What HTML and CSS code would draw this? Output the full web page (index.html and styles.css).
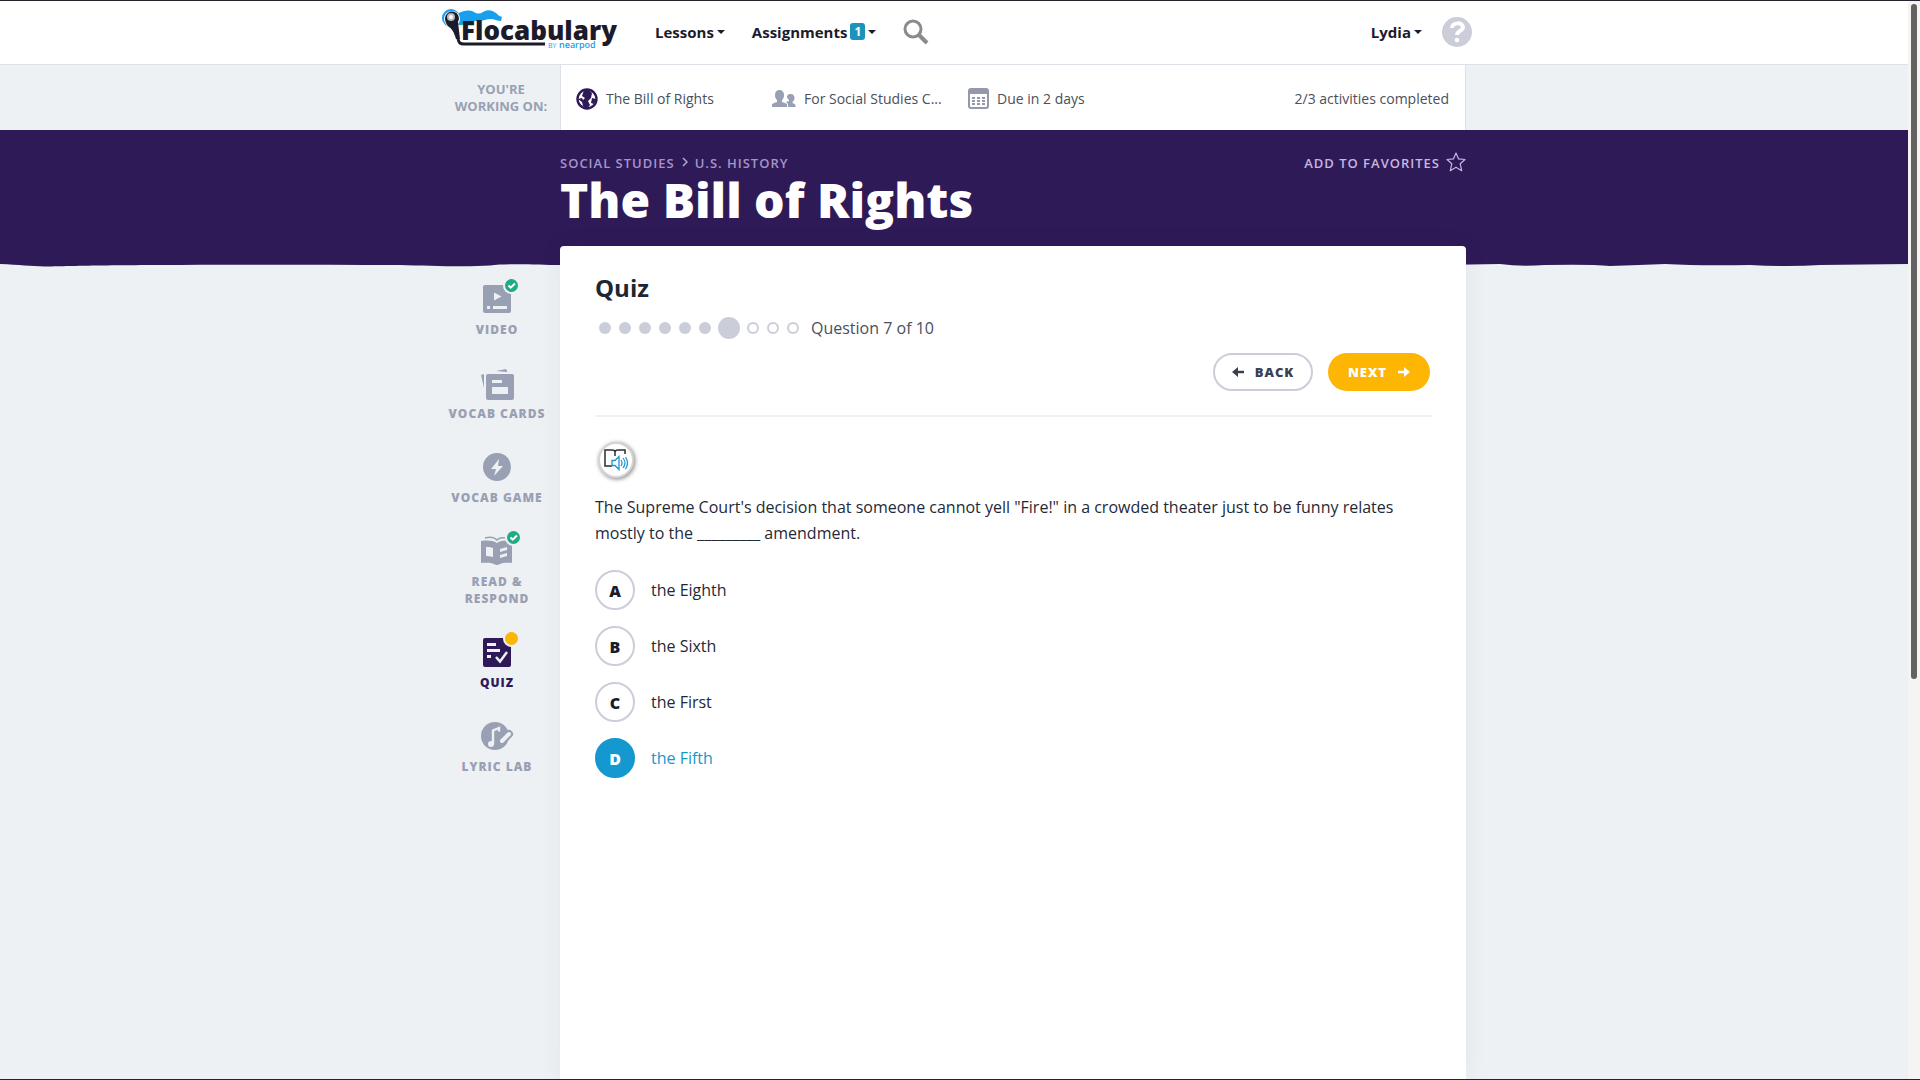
FILE: index.html
```html
<!DOCTYPE html>
<html lang="en">
<head>
<meta charset="utf-8">
<meta name="viewport" content="width=device-width, initial-scale=1">
<title>The Bill of Rights - Quiz - Flocabulary</title>
<link rel="stylesheet" href="styles.css">
</head>
<body>
<div class="page">
  <header class="header">
    <div class="wrap header-inner">
      <a class="logo" href="#" aria-label="Flocabulary by Nearpod">
        <svg width="176" height="46" viewBox="0 0 176 46">
          <path d="M16 5c6-3 11-5 17-2 3 2 6 2 9 0 5-3 9-2 13 1 2 2 3 3 6 4l-1 4c-4 0-7-2-10-2-5 0-8 2-12 2-6 0-10 0-13 3-4 1-6 2-9 0z" fill="#17a0ee"/>
          <circle cx="10" cy="9" r="9" fill="#17a0ee"/>
          <circle cx="11" cy="10" r="8" fill="#fff"/>
          <path d="M4 9a7 7 0 1 1 13 4l2 17h-4c-2-7-4-10-8-13-2-2-3-5-3-8z" fill="#1c1b2b"/>
          <circle cx="10" cy="8" r="4" fill="#b9b8bd"/>
          <circle cx="10" cy="8" r="2" fill="#fff"/>
          <path d="M17 30c1 4 2 5 6 5h81" fill="none" stroke="#1c1b2b" stroke-width="3"/>
          <text class="logo-name" x="20" y="31">Flocabulary</text>
          <text class="logo-by" x="107" y="39">BY</text>
          <text class="logo-near" x="118" y="39">nearpod</text>
        </svg>
      </a>
      <nav class="nav">
        <button type="button" class="nav-btn">Lessons <span class="caret"></span></button>
        <button type="button" class="nav-btn">Assignments <span class="count">1</span><span class="caret"></span></button>
        <button type="button" class="icon-btn" aria-label="Search">
          <svg width="26" height="26" viewBox="0 0 26 26" fill="none" stroke="#8b8b8b"><circle cx="10" cy="10" r="8" stroke-width="3"/><path d="M16 16l8 8" stroke-width="4"/></svg>
        </button>
      </nav>
      <div class="account">
        <button type="button" class="nav-btn">Lydia <span class="caret"></span></button>
        <button type="button" class="icon-btn" aria-label="Help">
          <svg width="30" height="30" viewBox="0 0 30 30"><circle cx="15" cy="15" r="15" fill="#cbced9"/><path d="M10 11c0-6 11-6 11-1 0 4-6 4-6 8" fill="none" stroke="#fff" stroke-width="4"/><circle cx="15" cy="23" r="2.3" fill="#fff"/></svg>
        </button>
      </div>
    </div>
  </header>

  <section class="assignment">
    <div class="wrap assignment-inner">
      <p class="working">YOU'RE<br>WORKING ON:</p>
      <div class="facts">
        <span class="fact fact-lesson">
          <svg width="22" height="22" viewBox="0 0 22 22"><circle cx="11" cy="11" r="9.500" fill="#fff" stroke="#2f1a58" stroke-width="2.400"/><path d="M8 2l5 0 3 3-1 5-3 3 2 4-3 4-4-3-1-4-4-3 4-1 1 2 2-2-3-2z" fill="#2f1a58"/><path d="M16 10l4 1-2 5-3-1z" fill="#2f1a58"/></svg>
          The Bill of Rights
        </span>
        <span class="fact fact-class">
          <svg width="24" height="18" viewBox="0 0 24 18" fill="#9aa0b3"><path d="M7.500 0c3 0 4.500 2 4.500 5s-1 4-2 5v2c2 1 5 1 5 3v2H0v-2c0-2 3-2 5-3v-2C4 9 3 8 3 5s1.500-5 4.500-5z"/><path d="M18.500 4c3 0 4 2 4 4s-1 3-2 4v1c2 1 3 1 3 3v1H16v-3l-2-2 3-1v-1c-1-1-2-2-2-3s.500-3 3.500-3z"/></svg>
          For Social Studies C...
        </span>
        <span class="fact">
          <svg width="21" height="21" viewBox="0 0 21 21"><rect x="1" y="1" width="19" height="19" rx="2" fill="#fff" stroke="#9598ab" stroke-width="2"/><path d="M1 1h19v5H1z" fill="#9598ab"/><path d="M4 10h13M4 13h13M4 16h13" stroke="#9598ab" stroke-width="2" stroke-dasharray="3 2"/></svg>
          Due in 2 days
        </span>
        <span class="done">2/3 activities completed</span>
      </div>
    </div>
  </section>

  <section class="hero">
    <div class="wrap hero-inner">
      <div class="hero-bar">
        <nav class="crumbs" aria-label="Breadcrumb">
          <a href="#">SOCIAL STUDIES</a>
          <svg width="6" height="12" viewBox="0 0 6 12" fill="none" stroke="#b6a6d3" stroke-width="1.500"><path d="M1 1l4 4-4 4"/></svg>
          <a href="#">U.S. HISTORY</a>
        </nav>
        <button type="button" class="favorite">ADD TO FAVORITES
          <svg width="20" height="22" viewBox="0 0 20 22" fill="none" stroke="#c5b7e0" stroke-width="1.200" stroke-linejoin="round"><path d="M10 1l2.600 5.900 6.400.600-4.800 4.300 1.500 6.900L10 15.300l-5.700 3.400 1.500-6.900L1 7.500l6.400-.600z"/></svg>
        </button>
      </div>
      <h1>The Bill of Rights</h1>
    </div>
  </section>
  <svg class="wave" viewBox="0 0 1908 4" preserveAspectRatio="none" aria-hidden="true"><path fill="#2f1a58" d="M0 0V1C20 2 30 3 45 3.500C80 3 100 2 180 2C260 1.500 330 2 400 2C430 3 470 4 490 2.500C510 0 540 2 560 2H1440L1500 1Q1520 4 1545 2Q1590 1 1610 3Q1640 2 1665 1Q1700 3 1750 2Q1790 4 1820 2L1908 1V0z"/></svg>

  <div class="wrap main">
    <nav class="side" aria-label="Activities">
      <a href="#" class="side-item">
        <span class="side-icon">
          <svg width="36" height="36" viewBox="0 0 36 36"><rect x="4" y="6" width="28" height="28" rx="2" fill="#9aa0b3"/><path d="M15 13.500v8l7.500-4zM8 27h3v3H8zM14 27h14v3H14z" fill="#edf1f4"/><circle cx="32.500" cy="6.500" r="8.500" fill="#edf1f4"/><circle cx="32.500" cy="6.500" r="6.500" fill="#21ab85"/><path d="M29.500 6.500l2.200 2.200L36 4.500" fill="none" stroke="#fff" stroke-width="2"/></svg>
        </span>VIDEO
      </a>
      <a href="#" class="side-item">
        <span class="side-icon">
          <svg width="36" height="36" viewBox="0 0 36 36" fill="#9aa0b3"><rect x="7" y="11" width="28" height="26" rx="2"/><path d="M2 12l3-1v14zM17 8l10-2 1.500 3z"/><path d="M13 17h10v3H13zM13 24h16v7H13z" fill="#edf1f4"/></svg>
        </span>VOCAB CARDS
      </a>
      <a href="#" class="side-item">
        <span class="side-icon">
          <svg width="36" height="36" viewBox="0 0 36 36"><circle cx="18" cy="20" r="14" fill="#9aa0b3"/><path d="M20 12l-8 10h5l-2 7 9-10h-5z" fill="#edf1f4"/></svg>
        </span>VOCAB GAME
      </a>
      <a href="#" class="side-item">
        <span class="side-icon">
          <svg width="36" height="36" viewBox="0 0 36 36"><path d="M2 10c7-1 12-.500 16 2 4-2.500 8-3 15-2v22c-5-.500-9-.500-12 1q-3 2-6 0c-3-1.500-8-1.500-13-1z" fill="#9aa0b3"/><path d="M6 7q8-2 12 2 3-3 8-2" fill="none" stroke="#9aa0b3" stroke-width="1.500"/><path d="M7 16q4-.500 7 1v9q-3-1-7-1zM21 18l7-2v3l-7 2zM21 24l7-2v3l-7 2z" fill="#edf1f4"/><circle cx="34.500" cy="6.500" r="8.500" fill="#edf1f4"/><circle cx="34.500" cy="6.500" r="6.500" fill="#21ab85"/><path d="M31.500 6.500l2.200 2.200L38 4.500" fill="none" stroke="#fff" stroke-width="2"/></svg>
        </span>READ &amp;<br>RESPOND
      </a>
      <a href="#" class="side-item is-current" aria-current="page">
        <span class="side-icon">
          <svg width="36" height="36" viewBox="0 0 36 36"><rect x="4" y="6" width="28" height="29" rx="2" fill="#2f1a58"/><path d="M8 11h9v3H8zM8 17h13v3H8zM8 23h4v3H8z" fill="#edf1f4"/><path d="M17 25l4 4.500 7-9.500" fill="none" stroke="#edf1f4" stroke-width="2.500"/><circle cx="32.500" cy="6.500" r="8.500" fill="#edf1f4"/><circle cx="32.500" cy="6.500" r="6.500" fill="#fcb603"/></svg>
        </span>QUIZ
      </a>
      <a href="#" class="side-item">
        <span class="side-icon">
          <svg width="36" height="36" viewBox="0 0 36 36"><circle cx="16" cy="20" r="14" fill="#9aa0b3"/><path d="M24 24l6-6" stroke="#9aa0b3" stroke-width="8" stroke-linecap="round"/><path d="M23 25l7-7" stroke="#edf1f4" stroke-width="4" stroke-linecap="round"/><circle cx="12" cy="28" r="3" fill="#edf1f4"/><path d="M14 28V14.500l6-2.500v3.500" fill="none" stroke="#edf1f4" stroke-width="2.400"/></svg>
        </span>LYRIC LAB
      </a>
    </nav>

    <main class="card">
      <h2>Quiz</h2>
      <div class="progress">
        <ol class="dots" aria-hidden="true">
          <li class="dot"></li><li class="dot"></li><li class="dot"></li><li class="dot"></li><li class="dot"></li><li class="dot"></li>
          <li class="dot now"></li>
          <li class="dot open"></li><li class="dot open"></li><li class="dot open"></li>
        </ol>
        <span>Question 7 of 10</span>
      </div>
      <div class="steps">
        <button type="button" class="btn back">
          <svg width="12" height="10" viewBox="0 0 12 10" fill="#3a4050"><path d="M0 5l6-5v3.800h6v2.400H6V10z"/></svg>BACK
        </button>
        <button type="button" class="btn next">NEXT
          <svg width="12" height="10" viewBox="0 0 12 10" fill="#fff"><path d="M12 5L6 0v3.800H0v2.400h6V10z"/></svg>
        </button>
      </div>
      <button type="button" class="reader" aria-label="Read aloud">
        <svg width="24" height="22" viewBox="0 0 24 22" fill="none"><path d="M8 17H1V1h7q3 0 3 2 0-2 3-2h7v4M11 3v4" stroke="#2b2d33" stroke-width="1.500"/><path d="M8 11.500h3l4-4v13l-4-4H8z" stroke="#1a93d0" stroke-width="1.300"/><path d="M17 11q2 3 0 6M19 9q4 5 0 10M21.500 8q4 6 0 12" stroke="#1a93d0" stroke-width="1.200"/></svg>
      </button>
      <form>
        <fieldset class="question">
          <legend>The Supreme Court's decision that someone cannot yell "Fire!" in a crowded theater just to be funny relates mostly to the _________ amendment.</legend>
          <label class="option"><input type="radio" name="answer" value="a"><span class="letter">A</span>the Eighth</label>
          <label class="option"><input type="radio" name="answer" value="b"><span class="letter">B</span>the Sixth</label>
          <label class="option"><input type="radio" name="answer" value="c"><span class="letter">C</span>the First</label>
          <label class="option"><input type="radio" name="answer" value="d" checked><span class="letter">D</span>the Fifth</label>
        </fieldset>
      </form>
    </main>
  </div>
</div>
<div class="scrollbar" aria-hidden="true"><div class="thumb"></div></div>
</body>
</html>
```
FILE: styles.css
```css
* { box-sizing: border-box; }

body {
  margin: 0;
  min-height: 100vh;
  display: grid;
  grid-template-columns: 1fr 12px;
  border-top: 1px solid #25222b;
  border-bottom: 1px solid #25222b;
  background: #edf1f4;
  color: #1f2937;
  font: 16px/26px "Open Sans", "Noto Sans", sans-serif;
}

h1, h2, p, ol, fieldset, legend { margin: 0; padding: 0; border: 0; }
ol { list-style: none; }
a { color: inherit; text-decoration: none; }
svg { display: block; flex: none; }
button {
  display: flex;
  align-items: center;
  margin: 0;
  padding: 0;
  border: 0;
  background: none;
  color: inherit;
  font: inherit;
  cursor: pointer;
}

.page { display: flex; flex-direction: column; min-width: 0; }
.wrap { width: 100%; max-width: 1040px; margin: 0 auto; }

/* Top navigation */
.header { background: #fff; border-bottom: 1px solid #dde1e8; }
.header-inner { display: flex; align-items: center; height: 63px; padding: 0 2px 2px 7px; }
.logo { margin-right: 38px; }
.logo-name { font-size: 26px; font-weight: 900; fill: #1c1b2b; }
.logo-by { font-size: 7px; fill: #17a0ee; }
.logo-near { font-size: 9px; font-weight: 600; fill: #17a0ee; }
.nav { display: flex; align-items: center; gap: 27px; }
.nav-btn { gap: 3px; color: #1c1b2b; font-size: 15px; font-weight: 700; }
.caret { border: 4px solid transparent; border-top-color: #1c1b2b; border-bottom: 0; }
.count {
  width: 15px;
  border-radius: 3px;
  background: #1b93bd;
  color: #fff;
  font-size: 12px;
  line-height: 17px;
  text-align: center;
}
.account { display: flex; align-items: center; gap: 20px; margin-left: auto; }

/* Assignment strip */
.assignment-inner { display: grid; grid-template-columns: 126px 1fr; padding-right: 8px; }
.working {
  align-self: center;
  padding-left: 8px;
  color: #9aa0b3;
  font-size: 13px;
  font-weight: 700;
  line-height: 17px;
  text-align: center;
}
.facts {
  display: flex;
  align-items: center;
  height: 65px;
  padding: 2px 16px 0 15px;
  border: solid #dde1e8;
  border-width: 0 1px;
  background: #fff;
  color: #4a4f5c;
  font-size: 14px;
}
.fact { display: flex; align-items: center; gap: 8px; }
.fact-lesson { width: 196px; }
.fact-class { width: 196px; }
.done { margin-left: auto; }

/* Lesson banner */
.hero { background: #2f1a58; color: #fff; }
.hero-inner { height: 133px; padding: 21px 8px 0 126px; }
.hero-bar { display: flex; justify-content: space-between; align-items: center; height: 24px; }
.crumbs { display: flex; align-items: center; gap: 7px; color: #a594c8; }
.crumbs, .favorite { font-size: 13px; font-weight: 600; letter-spacing: 1px; }
.favorite { gap: 6px; color: #c5b7e0; }
h1 { font-size: 48px; font-weight: 900; line-height: 50px; }
.wave { width: 100%; height: 4px; }

/* Content */
.main { display: grid; grid-template-columns: 126px 1fr; flex: 1; padding-right: 8px; }
.side { display: flex; flex-direction: column; gap: 25px; padding-top: 12px; }
.side-item {
  color: #9aa0b3;
  font-size: 12px;
  font-weight: 800;
  letter-spacing: 1px;
  line-height: 17px;
  text-align: center;
}
.side-item.is-current { color: #2f1a58; }
.side-icon { display: flex; justify-content: center; align-items: flex-start; height: 42px; }
.side-icon svg { overflow: visible; }

.card {
  margin-top: -21px;
  padding: 26px 34px 40px 35px;
  border-radius: 4px 4px 0 0;
  background: #fff;
  box-shadow: 0 0 24px rgba(47, 26, 88, .06);
}
h2 { color: #1c2733; font-size: 24px; font-weight: 700; line-height: 32px; }
.progress { display: flex; align-items: center; gap: 12px; padding: 11px 0 0 4px; color: #4a4f5c; }
.dots { display: flex; align-items: center; gap: 8px; }
.dot { width: 12px; height: 12px; border-radius: 50%; background: #cbced9; }
.dot.now { width: 22px; height: 22px; margin: 0 -1px; }
.dot.open { border: 2px solid #cbced9; background: #fff; }
.steps {
  display: flex;
  justify-content: flex-end;
  gap: 15px;
  padding: 12px 2px 24px 0;
  border-bottom: 2px solid #eff1f4;
}
.btn {
  justify-content: center;
  gap: 11px;
  height: 38px;
  border-radius: 19px;
  font-size: 13px;
  font-weight: 800;
  letter-spacing: 1px;
}
.back { width: 100px; border: 2px solid #cbced9; color: #3a4050; }
.next { width: 102px; background: #fcb603; color: #fff; }
.reader {
  justify-content: center;
  width: 36px;
  height: 36px;
  margin: 25px 0 16px 3px;
  border: 2px solid #d5d5d5;
  border-radius: 50%;
  background: #fff;
  box-shadow: 1px 1px 4px rgba(0, 0, 0, .5);
}
.question { display: flex; flex-direction: column; gap: 16px; min-width: 0; }
legend { padding-bottom: 24px; }
.option { display: flex; align-items: center; gap: 16px; width: max-content; color: #1f2937; cursor: pointer; }
.option input { position: absolute; opacity: 0; }
.letter {
  width: 40px;
  height: 40px;
  border: 2px solid #cbced9;
  border-radius: 50%;
  color: #1c1b2b;
  font-weight: 800;
  line-height: 38px;
  text-align: center;
}
.option:has(input:checked) { color: #1597c9; }
.option input:checked + .letter { border-color: #1597cf; background: #1597cf; color: #fff; }
.option input:focus-visible + .letter { outline: 2px solid #2f1a58; }

/* Scroll track */
.scrollbar { padding: 3px; background: #f5f4f2; }
.thumb { width: 6px; height: calc(100vh * 5 / 8); border-radius: 3px; background: #646260; }
```
